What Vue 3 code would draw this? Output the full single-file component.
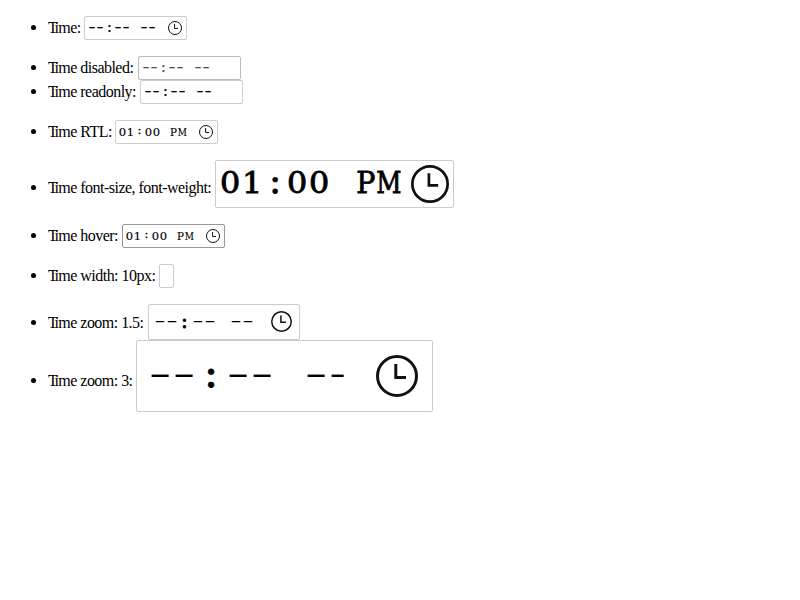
<script setup>
const blank = [7.2, 15.2, 24.5, 33.5, 41.5, 59.5, 67.5]
const filled = [6, 14.5, 23.5, 32.3, 40.7, 58, 66.8]
const B = '--:----'
const V = '01:00PM'
const rows = [
  { label: 'Time:', left: 84, w: 103, text: B, at: blank },
  { label: 'Time disabled:', left: 138, w: 103, text: B, at: blank, kind: 'disabled', gap: true, noIcon: true },
  { label: 'Time readonly:', left: 140, w: 103, text: B, at: blank, noIcon: true },
  { label: 'Time RTL:', left: 115, w: 103, text: V, at: filled, gap: true },
  { label: 'Time font-size, font-weight:', left: 215, w: 239, text: V, at: [14, 36, 59, 81.5, 103.5, 150, 172.5], kind: 'big', gap: true },
  { label: 'Time hover:', left: 122, w: 103, text: V, at: filled, kind: 'hover', gap: true },
  { label: 'Time width: 10px:', left: 159, w: 15, text: '', at: [], gap: true, noIcon: true },
  { label: 'Time zoom: 1.5:', left: 148, w: 152, text: B, at: [11, 23, 35.5, 49, 61, 87, 99], kind: 'medium', gap: true },
  { label: 'Time zoom: 3:', left: 136, w: 297, text: B, at: [22.5, 46.5, 74, 100.5, 124.5, 178.5, 202.5], kind: 'large' }
]
const glyphClass = (c) => ({ '-': 'dash', ':': 'colon', M: 'letter-m', P: 'letter-p' })[c] || 'digit'
</script>

<template>
  <ul class="list">
    <li v-for="r in rows" :key="r.label" class="row" :class="[r.kind, { gap: r.gap, value: r.text === V }]">
      <span class="bullet"></span>
      <span class="label" :style="{ width: r.left - 48 + 'px' }"><span class="cap">T</span>{{ r.label.slice(1) }}</span>
      <div class="field" :style="{ width: r.w + 'px' }">
        <span
          v-for="(c, i) in r.text"
          :key="i"
          class="cell"
          :style="{ marginLeft: r.at[i] - (r.at[i - 1] || 0) + 'px' }"
        ><span class="glyph" :class="glyphClass(c)">{{ c }}</span></span>
        <svg v-if="!r.noIcon" class="clock" viewBox="0 0 14 14">
          <circle cx="7" cy="7" r="6.5" />
          <path d="M6.6 3v4.5H10" />
        </svg>
      </div>
    </li>
  </ul>
</template>

<style scoped>
.list {
  list-style: none;
  margin: 0;
  padding: 16px 0 0 31px;
  font: 16px/18px "Liberation Serif", serif;
  color: #000;
}
.row {
  display: flex;
  align-items: flex-start;
  --label-top: 2.5px;
  --size: 10.5px;
  --height: 24px;
  --icon: 14px;
  --end: 4px;
  --dash-size: 13.333px;
}
.gap { margin-top: 16px; }
.bullet {
  width: 5px;
  height: 5px;
  margin: calc(var(--label-top) + 6px) 12px 0 0;
  border-radius: 50%;
  background: #000;
}
.label {
  flex: none;
  margin-top: var(--label-top);
  letter-spacing: -0.53px;
  white-space: nowrap;
}
.cap { margin-right: -2.8px; }
.field {
  box-sizing: border-box;
  display: flex;
  align-items: center;
  flex: none;
  height: var(--height);
  border: 1px solid #ccc;
  border-radius: 2px;
  font-family: "DejaVu Serif", serif;
  font-size: var(--size);
  overflow: hidden;
}
.cell {
  display: flex;
  flex: none;
  justify-content: center;
  width: 0;
}
.glyph {
  flex: none;
  line-height: 1.2;
  -webkit-text-stroke: 0.15px currentColor;
}
.digit { transform: scale(1.1, 1.05); }
.dash {
  font-family: "Liberation Mono", monospace;
  font-size: var(--dash-size);
  transform: scale(1.45, 1);
}
.colon {
  font-size: 1.35em;
  line-height: 1;
  transform: translateY(-0.06em);
  -webkit-text-stroke-width: 0.3px;
}
.value .colon { font-size: 1.1em; }
.letter-m { transform: scale(0.85, 1.05); }
.letter-p { transform: scale(0.98, 1.05); }
.clock {
  flex: none;
  width: var(--icon);
  height: var(--icon);
  margin: 0 var(--end) 0 auto;
  fill: none;
  stroke: #111;
  stroke-width: 1;
}
.disabled .field { border-color: #bbb; color: #555; }
.hover .field { border-color: #999; }
.big {
  --label-top: 19px;
  --size: 29px;
  --height: 48px;
  --icon: 38px;
}
.big .cell { position: relative; top: -1px; }
.big .glyph { -webkit-text-stroke-width: 0.8px; }
.big .colon { font-size: 1.25em; }
.medium {
  --label-top: 10px;
  --size: 15px;
  --height: 36px;
  --icon: 21px;
  --end: 7px;
  --dash-size: 20px;
}
.medium .dash { transform: scale(1.5, 0.8); }
.medium .colon { -webkit-text-stroke-width: 0.8px; }
.medium .clock { position: relative; top: -0.5px; }
.large {
  --label-top: 32px;
  --size: 31px;
  --height: 72px;
  --icon: 42px;
  --end: 14px;
  --dash-size: 40px;
}
.large .dash { transform: scale(1.53, 0.75); }
.large .colon { -webkit-text-stroke-width: 1px; }
.large .cell:last-of-type .glyph { clip-path: inset(0 40% 0 0); }
</style>
